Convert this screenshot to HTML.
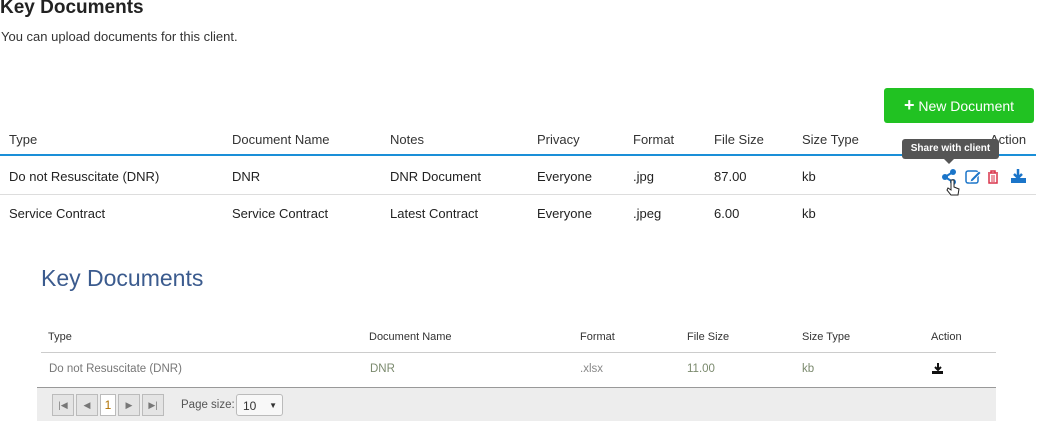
<!DOCTYPE html>
<html><head><style>
body{margin:0;width:1038px;height:420px;overflow:hidden;background:#fff;font-family:"Liberation Sans",sans-serif;position:relative;color:#222}
.a{position:absolute;white-space:nowrap}
h1{position:absolute;left:0;top:-3px;margin:0;font-size:19px;font-weight:bold;color:#222}
.t{font-size:13px;color:#222}
.h{font-size:13px;color:#333}
.b{font-size:11px;color:#333}
.r{font-size:11.5px;color:#7b8a6e}
</style></head><body>
<h1>Key Documents</h1>
<div class="a" style="left:1px;top:29px;font-size:13px;color:#333">You can upload documents for this client.</div>
<div class="a" style="left:884px;top:88px;width:150px;height:35px;background:#21c222;border-radius:3px;color:#fff;font-size:14px;line-height:34px;text-align:center"><b style="font-size:18px">+</b> New Document</div>
<div class="a h" style="left:9px;top:132px">Type</div>
<div class="a h" style="left:232px;top:132px">Document Name</div>
<div class="a h" style="left:390px;top:132px">Notes</div>
<div class="a h" style="left:537px;top:132px">Privacy</div>
<div class="a h" style="left:633px;top:132px">Format</div>
<div class="a h" style="left:714px;top:132px">File Size</div>
<div class="a h" style="left:802px;top:132px">Size Type</div>
<div class="a h" style="left:990px;top:132px">Action</div>
<div class="a" style="left:0;top:154px;width:1036px;height:2px;background:#1a8fd8"></div>
<div class="a t" style="left:9px;top:169px">Do not Resuscitate (DNR)</div>
<div class="a t" style="left:232px;top:169px">DNR</div>
<div class="a t" style="left:390px;top:169px">DNR Document</div>
<div class="a t" style="left:537px;top:169px">Everyone</div>
<div class="a t" style="left:633px;top:169px">.jpg</div>
<div class="a t" style="left:714px;top:169px">87.00</div>
<div class="a t" style="left:802px;top:169px">kb</div>
<div class="a" style="left:0;top:194px;width:1036px;height:1px;background:#ddd"></div>
<div class="a t" style="left:9px;top:206px">Service Contract</div>
<div class="a t" style="left:232px;top:206px">Service Contract</div>
<div class="a t" style="left:390px;top:206px">Latest Contract</div>
<div class="a t" style="left:537px;top:206px">Everyone</div>
<div class="a t" style="left:633px;top:206px">.jpeg</div>
<div class="a t" style="left:714px;top:206px">6.00</div>
<div class="a t" style="left:802px;top:206px">kb</div>
<div class="a" style="left:902px;top:139px;width:97px;height:20px;background:#555;border-radius:3px;color:#fff;font-size:10px;font-weight:bold;line-height:20px;text-align:center">Share with client</div>
<div class="a" style="left:944px;top:159px;width:0;height:0;border-left:5px solid transparent;border-right:5px solid transparent;border-top:5px solid #555"></div>
<svg class="a" style="left:940px;top:166px" width="90" height="40">
<g fill="#1b75c9"><circle cx="13" cy="6" r="3"/><circle cx="13" cy="16" r="3"/><circle cx="5" cy="11" r="3"/></g>
<path d="M5 11L13 6M5 11L13 16" stroke="#1b75c9" stroke-width="2"/>
<rect x="26" y="5" width="12" height="12" rx="2" fill="none" stroke="#1b75c9" stroke-width="1.5"/>
<path d="M31 13l8-8 2 2-8 8-3 1z" fill="#1b75c9" stroke="#fff" stroke-width=".8"/>
<path d="M48 7h10M51 7V5h4v2M49 8v9h8V8" fill="none" stroke="#d9344a" stroke-width="1.5"/>
<path d="M52 9v7M54 9v7" stroke="#d9344a"/>
<path d="M78 3v8M74 8l4 4 4-4" stroke="#1b75c9" stroke-width="2.5" fill="none"/>
<rect x="71" y="12" width="15" height="5" fill="#1b75c9"/>
<path d="M11 14v10l-3-2-1 2 4 5h7l1-6-5-2v-7z" fill="#fff" stroke="#222" stroke-width="1"/>
</svg>
<div class="a" style="left:41px;top:265px;font-size:23px;color:#3b5b8e">Key Documents</div>
<div class="a b" style="left:48px;top:331px">Type</div>
<div class="a b" style="left:369px;top:331px">Document Name</div>
<div class="a b" style="left:580px;top:331px">Format</div>
<div class="a b" style="left:687px;top:331px">File Size</div>
<div class="a b" style="left:802px;top:331px">Size Type</div>
<div class="a b" style="left:931px;top:331px">Action</div>
<div class="a" style="left:41px;top:352px;width:955px;height:1px;background:#ccc"></div>
<div class="a r" style="left:49px;top:363px;color:#777">Do not Resuscitate (DNR)</div>
<div class="a r" style="left:370px;top:363px">DNR</div>
<div class="a r" style="left:580px;top:363px;color:#888">.xlsx</div>
<div class="a r" style="left:687px;top:363px">11.00</div>
<div class="a r" style="left:802px;top:363px">kb</div>
<svg class="a" style="left:932px;top:363px" width="12" height="12"><path d="M6 0v6M3 4l3 3 3-3" stroke="#111" stroke-width="2" fill="none"/><rect x="0" y="8" width="11" height="3" fill="#111"/></svg>
<div class="a" style="left:37px;top:387px;width:959px;height:33px;background:#ededed;border-top:1px solid #999"></div>
<div class="a" style="left:52px;top:394px;display:flex;gap:2px">
<div style="width:20px;height:20px;border:1px solid #bbb;background:#e4e4e4;font-size:9px;line-height:20px;text-align:center;color:#777">|◀</div>
<div style="width:20px;height:20px;border:1px solid #bbb;background:#e4e4e4;font-size:9px;line-height:20px;text-align:center;color:#777">◀</div>
<div style="width:14px;height:20px;border:1px solid #bbb;background:#fff;font-size:12px;line-height:20px;text-align:center;color:#b07000">1</div>
<div style="width:20px;height:20px;border:1px solid #bbb;background:#e4e4e4;font-size:9px;line-height:20px;text-align:center;color:#777">▶</div>
<div style="width:20px;height:20px;border:1px solid #bbb;background:#e4e4e4;font-size:9px;line-height:20px;text-align:center;color:#777">▶|</div>
</div>
<div class="a" style="left:181px;top:399px;font-size:11.5px;color:#555">Page size:</div>
<div class="a" style="left:236px;top:394px;width:47px;height:22px;border:1px solid #bbb;border-radius:3px;background:#f8f8f8;font-size:12px;line-height:22px;color:#333;padding-left:6px;box-sizing:border-box">10<span style="position:absolute;right:5px;font-size:8px">▼</span></div>
</body></html>
